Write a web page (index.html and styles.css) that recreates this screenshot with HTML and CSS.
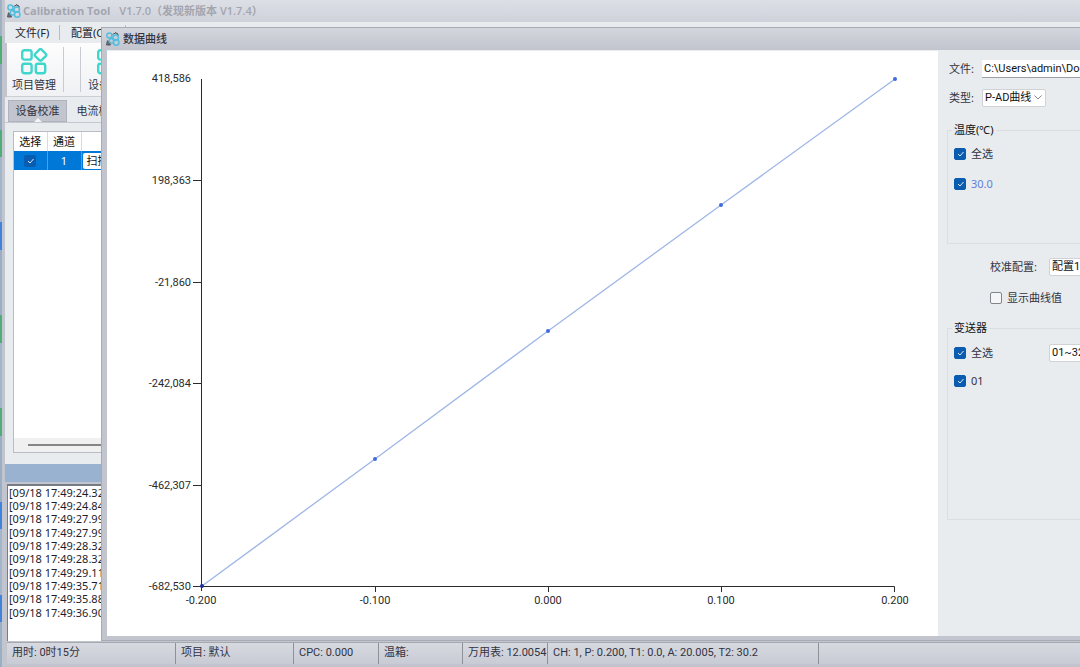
FILE: index.html
```
<!DOCTYPE html>
<html lang="zh-CN">
<head>
    <meta charset="UTF-8">
    <meta name="viewport" content="width=device-width, initial-scale=1.0">
    <title>Calibration Tool</title>
    <link rel="stylesheet" href="styles.css">
</head>
<body>
    <svg class="symbols" aria-hidden="true">
        <symbol id="app-logo" viewBox="0 0 14 14">
            <path d="M6.500 2.500 9.500 1M9 .5l3 1.500v2M1.500 8.500.5 13h4L3 9" fill="#6b6e75" stroke="#55585e" stroke-width="1"/>
            <g fill="none" stroke="#52bfdf" stroke-width="1.5">
                <circle cx="3.400" cy="3.400" r="2.500"/>
                <circle cx="9.800" cy="5.600" r="2.700"/>
                <path d="M5.500 4.500C6 7 7 8 8.500 8.200"/>
                <circle cx="5.600" cy="8.800" r="2.300"/>
                <circle cx="10.200" cy="10.400" r="2.800"/>
            </g>
        </symbol>
        <symbol id="grid-icon" viewBox="0 0 28 28">
            <g fill="none" stroke="#3fd6cc" stroke-width="2.4">
                <rect x="2.2" y="2.2" width="9.4" height="9.4" rx="2.2"/>
                <rect x="2.2" y="15.8" width="9.4" height="9.4" rx="2.2"/>
                <rect x="15.8" y="15.8" width="9.4" height="9.4" rx="2.2"/>
                <rect x="16" y="2.4" width="9" height="9" rx="1.6" transform="rotate(45 20.5 6.9)"/>
            </g>
        </symbol>
    </svg>

    <div class="desktop">
        <div class="main-window">
            <header class="title-bar">
                <svg class="logo"><use href="#app-logo"/></svg>
                <h1>Calibration Tool</h1>
                <span>V1.7.0（发现新版本 V1.7.4）</span>
            </header>

            <nav class="menu-bar">
                <button type="button">文件(F)</button>
                <button type="button">配置(C)</button>
            </nav>

            <div class="toolbar">
                <button type="button" class="tool">
                    <svg><use href="#grid-icon"/></svg>
                    项目管理
                </button>
                <div class="tool-divider"></div>
                <button type="button" class="tool">
                    <svg><use href="#grid-icon"/></svg>
                    设备管理
                </button>
            </div>

            <div class="tabs">
                <button type="button" class="tab active">设备校准</button>
                <button type="button" class="tab">电流校准</button>
            </div>

            <div class="table-area">
                <div class="table-box">
                    <table>
                        <thead>
                            <tr><th>选择</th><th>通道</th><th></th></tr>
                        </thead>
                        <tbody>
                            <tr>
                                <td><input type="checkbox" class="check" aria-label="选择通道 1" checked></td>
                                <td>1</td>
                                <td class="scan-cell"><button type="button">扫描</button></td>
                            </tr>
                        </tbody>
                    </table>
                    <div class="scroll-track"><div class="scroll-thumb"></div></div>
                </div>
            </div>

            <div class="splitter"></div>

            <div class="log">
                <p>[09/18 17:49:24.32</p>
                <p>[09/18 17:49:24.84</p>
                <p>[09/18 17:49:27.99</p>
                <p>[09/18 17:49:27.99</p>
                <p>[09/18 17:49:28.32</p>
                <p>[09/18 17:49:28.32</p>
                <p>[09/18 17:49:29.11</p>
                <p>[09/18 17:49:35.71</p>
                <p>[09/18 17:49:35.88</p>
                <p>[09/18 17:49:36.90</p>
            </div>

            <footer class="status-bar">
                <span>用时: 0时15分</span>
                <span>项目: 默认</span>
                <span>CPC: 0.000</span>
                <span>温箱:</span>
                <span>万用表: 12.0054</span>
                <span>CH: 1, P: 0.200, T1: 0.0, A: 20.005, T2: 30.2</span>
                <span></span>
            </footer>
        </div>

        <section class="dialog">
            <header class="dialog-title">
                <svg class="logo"><use href="#app-logo"/></svg>
                <h2>数据曲线</h2>
            </header>
            <div class="dialog-body">
                <div class="chart">
                    <svg viewBox="0 0 831 585">
                        <g class="axis">
                            <path d="M94.500 28V540M94 535.500H787.500V541"/>
                            <path d="M86 129.500h8M86 231.500h8M86 332.500h8M86 434.500h8M86 535.500h8"/>
                            <path d="M268.500 535v6M441.500 535v6M614.500 535v6"/>
                        </g>
                        <g class="y-labels">
                            <text x="84" y="31">418,586</text>
                            <text x="84" y="133">198,363</text>
                            <text x="84" y="235">-21,860</text>
                            <text x="84" y="336">-242,084</text>
                            <text x="84" y="438">-462,307</text>
                            <text x="84" y="539">-682,530</text>
                        </g>
                        <g class="x-labels">
                            <text x="94" y="553">-0.200</text>
                            <text x="268" y="553">-0.100</text>
                            <text x="441" y="553">0.000</text>
                            <text x="614" y="553">0.100</text>
                            <text x="788" y="553">0.200</text>
                        </g>
                        <polyline class="curve" points="95,535 268,408 441,280 614,154 788,28"/>
                        <g class="points">
                            <circle class="start" cx="95" cy="535" r="2"/>
                            <circle cx="268" cy="408" r="2"/>
                            <circle cx="441" cy="280" r="2"/>
                            <circle cx="614" cy="154" r="2"/>
                            <circle cx="788" cy="28" r="2"/>
                        </g>
                    </svg>
                </div>

                <form class="side-panel">
                    <div class="field">
                        <label for="file">文件:</label>
                        <input type="text" id="file" value="C:\Users\admin\Documents">
                    </div>
                    <div class="field">
                        <label for="type">类型:</label>
                        <select id="type"><option>P-AD曲线</option></select>
                    </div>
                    <fieldset class="group temperature">
                        <legend>温度(℃)</legend>
                        <label><input type="checkbox" class="check" checked>全选</label>
                        <label class="series"><input type="checkbox" class="check" checked>30.0</label>
                    </fieldset>
                    <div class="field config">
                        <label for="config">校准配置:</label>
                        <select id="config"><option>配置1</option></select>
                    </div>
                    <label class="show-values"><input type="checkbox" class="check">显示曲线值</label>
                    <fieldset class="group transmitter">
                        <legend>变送器</legend>
                        <div class="group-row">
                            <label><input type="checkbox" class="check" checked>全选</label>
                            <select aria-label="变送器范围"><option>01~32</option></select>
                        </div>
                        <label><input type="checkbox" class="check" checked>01</label>
                    </fieldset>
                </form>
            </div>
        </section>
    </div>
</body>
</html>
```

FILE: styles.css
```
* {
    box-sizing: border-box;
}

body {
    margin: 0;
    font-family: "Noto Sans", "Noto Sans CJK SC", sans-serif;
    font-size: 11px;
    line-height: 16px;
    color: #33333f;
}

button, input, select {
    font: inherit;
    color: inherit;
}

h1, h2, p {
    margin: 0;
    font-size: inherit;
}

.symbols {
    position: absolute;
    width: 0;
    height: 0;
}

.desktop {
    position: relative;
    height: 100vh;
    overflow: hidden;
    padding-left: 2px;
    background: linear-gradient(#9fb2c4 0 36px, #4fae78 36px 64px, #93a8be 64px 130px, #4fae78 130px 157px, #a3b5ca 157px 222px, #3f83dc 222px 250px, #9aaec6 250px 315px, #4fae78 315px 343px, #a3b5ca 343px 408px, #4fae78 408px 436px, #9aaec6 436px 502px, #3f83dc 502px 529px, #a3b5ca 529px 595px, #3f83dc 595px 622px, #9aaec6 622px);
}

/* Ventana principal */
.main-window {
    display: flex;
    flex-direction: column;
    height: 100%;
    padding: 0 0 3px 3px;
    background-color: #c2c4ce;
}

.title-bar, .dialog-title {
    display: flex;
    align-items: center;
}

.title-bar {
    flex: 0 0 22px;
    gap: 9px;
    padding-left: 2px;
    background: linear-gradient(#dcdfe6, #cfd2da);
    color: #a3a5ae;
    font-family: "Open Sans", "Noto Sans CJK SC", sans-serif;
    font-weight: 600;
}

.title-bar .logo {
    margin-right: -7px;
}

.logo {
    width: 14px;
    height: 14px;
}

.menu-bar {
    display: flex;
    flex: 0 0 21px;
    background-color: #e8ecef;
}

.menu-bar button {
    width: 55px;
    padding: 0 0 0 10px;
    border: none;
    border-right: 1px solid #b9bcc4;
    background: none;
    text-align: left;
    margin: 3px 0;
    line-height: 15px;
    color: #22222a;
}

.menu-bar button + button {
    width: 66px;
    padding-left: 11px;
}

.toolbar {
    display: flex;
    flex: 0 0 54px;
    margin-left: 2px;
    background: linear-gradient(#fdfdfd, #eff1f4);
    border-bottom: 1px solid #ccced6;
}

.tool {
    display: flex;
    flex-direction: column;
    align-items: center;
    width: 56px;
    padding: 5px 2px 0 0;
    border: none;
    background: none;
    white-space: nowrap;
}

.tool svg {
    width: 28px;
    height: 28px;
    margin-bottom: 1px;
}

.tool-divider {
    width: 18px;
    margin: 4px 0;
    border: solid #c9cbd2;
    border-width: 0 1px;
}

.tool-divider + .tool {
    padding-left: 4px;
}

.tabs {
    display: flex;
    flex: 0 0 26px;
    padding: 3px 0 0 3px;
    background-color: #e8ecef;
    border-bottom: 1px solid #c6c8d0;
}

.tab {
    position: relative;
    width: 59px;
    padding: 0;
    border: none;
    background: none;
    white-space: nowrap;
}

.tab + .tab {
    padding-left: 4px;
}

.tab.active {
    background-color: #c2c4ce;
    border: 1px solid #b0b3bd;
}

.tab.active::after {
    content: "";
    position: absolute;
    left: 25px;
    bottom: -1px;
    border: 4px solid transparent;
    border-top: none;
    border-bottom-color: #f2f4f6;
}

.table-area {
    flex: 1;
    padding: 8px 8px 11px;
    background-color: #e8ecef;
}

.table-box {
    display: flex;
    flex-direction: column;
    justify-content: space-between;
    height: 100%;
    background-color: #fff;
    border: 1px solid #b9bcc6;
}

table {
    width: 100%;
    table-layout: fixed;
    border-collapse: collapse;
    text-align: center;
}

th, td {
    height: 19px;
    padding: 0;
    border-right: 1px solid #d3dbe4;
    font-weight: normal;
    color: #111;
}

th:first-child, th:nth-child(2) {
    width: 34px;
}

th:first-child {
    width: 33px;
}

td {
    background-color: #0078d7;
    border-right-color: #4d9fe0;
    color: #fff;
}

.scan-cell {
    text-align: left;
}

.scan-cell button {
    display: block;
    width: 60px;
    height: 16px;
    margin-left: 1px;
    padding: 0 4px;
    border: none;
    border-radius: 2px;
    background-color: #fff;
    line-height: 16px;
    text-align: left;
    color: #111;
}

.scroll-track {
    height: 14px;
    padding: 6px 0 0 14px;
    background-color: #f0f0f0;
}

.scroll-thumb {
    height: 2px;
    background-color: #858585;
}

.splitter {
    flex: 0 0 18px;
    background-color: #99b2cf;
}

.log {
    flex: 0 0 157px;
    margin: 2px 0 0 2px;
    padding: 0 1px;
    border: 1px solid #777b83;
    border-width: 2px 0 0 1px;
    background-color: #fff;
    line-height: 13px;
    color: #1d1d2a;
}

.log p:nth-child(3n) {
    padding-bottom: 1px;
}

.status-bar {
    display: flex;
    flex: 0 0 22px;
    margin: 1px 0 0 2px;
    border-top: 1px solid #a6a8b0;
    background: linear-gradient(#d6d9df, #c8cbd4);
    font-family: Roboto, "Noto Sans CJK SC", sans-serif;
    line-height: 20px;
    white-space: nowrap;
}

.status-bar span {
    padding-left: 5px;
    border-right: 1px solid #8f9199;
}

.status-bar span:nth-child(1) { width: 169px; }
.status-bar span:nth-child(2) { width: 118px; }
.status-bar span:nth-child(3) { width: 85px; }
.status-bar span:nth-child(4) { width: 84px; }
.status-bar span:nth-child(5) { width: 85px; }
.status-bar span:nth-child(6) { width: 271px; }
.status-bar span:nth-child(7) { flex: 1; border-right: none; }

/* Ventana de la curva */
.dialog {
    position: absolute;
    top: 27px;
    right: 0;
    bottom: 26px;
    left: 101px;
    display: flex;
    flex-direction: column;
    padding: 0 0 4px 5px;
    border: 1px solid #a8abb5;
    border-right: none;
    background-color: #c2c4ce;
}

.dialog-title {
    flex: 0 0 22px;
    gap: 3px;
    margin-left: -5px;
    padding-left: 4px;
    background: linear-gradient(#d3d6dd, #c2c4ce);
}

.dialog-title h2 {
    font-weight: 500;
}

.dialog-body {
    display: flex;
    flex: 1;
    min-height: 0;
    background-color: #e8ecef;
    border-top: 1px solid #e8ecef;
}

.chart {
    flex: 1;
    min-width: 0;
    background-color: #fff;
}

.chart svg {
    display: block;
    width: 100%;
    height: 100%;
}

.axis {
    fill: none;
    stroke: #2b2b2b;
    stroke-width: 1;
}

.y-labels, .x-labels {
    font-family: Roboto, sans-serif;
    font-size: 11px;
    fill: #2b2b2b;
}

.y-labels {
    text-anchor: end;
}

.x-labels {
    text-anchor: middle;
}

.curve {
    fill: none;
    stroke: #9fb6e6;
    stroke-width: 1.3;
}

.points {
    fill: #4169e1;
}

.points .start {
    fill: #1c2f9c;
}

.side-panel {
    flex: 0 0 142px;
    padding: 8px 0 0 11px;
    overflow: hidden;
    white-space: nowrap;
}

.field {
    display: flex;
    align-items: center;
    height: 19px;
    margin-bottom: 10px;
}

.field label {
    width: 33px;
    flex-shrink: 0;
}

.field input {
    width: 200px;
    height: 18px;
    flex-shrink: 0;
    padding: 0 2px;
    border: none;
    border-bottom: 1px solid #9b9ea6;
    background-color: #fff;
    font-family: Roboto, sans-serif;
    color: #111;
}

select {
    flex-shrink: 0;
    width: 64px;
    height: 18px;
    padding: 0 2px;
    appearance: none;
    border: 1px solid #d0d2d6;
    border-radius: 2px;
    background: #fff url("data:image/svg+xml,%3Csvg xmlns='http://www.w3.org/2000/svg' width='8' height='5'%3E%3Cpath d='M.5.5 4 4 7.500.5' fill='none' stroke='%23888'/%3E%3C/svg%3E") no-repeat right 3px center;
    font-family: Roboto, "Noto Sans CJK SC", sans-serif;
    line-height: 16px;
    color: #111;
}

.group {
    width: 200px;
    margin: 0 0 0 -2px;
    padding: 0 0 0 6px;
    border: 1px solid #dadee2;
}

.group legend {
    margin-left: -2px;
    padding: 0 2px;
    color: #111;
}

.group label, .show-values {
    display: flex;
    align-items: center;
    gap: 5px;
}

.temperature {
    height: 122px;
    margin-top: 15px;
}

.temperature label {
    margin: 8px 0 14px;
}

.temperature .series {
    margin: 0;
    color: #6380dc;
}

.config {
    margin: 13px 0 14px 41px;
}

.config label {
    width: 59px;
}

.show-values {
    margin-left: 41px;
}

.transmitter {
    height: 200px;
    margin-top: 14px;
}

.group-row {
    display: flex;
    align-items: center;
    height: 18px;
    margin: 8px 0 11px;
}

.group-row label {
    width: 95px;
}

.check {
    width: 12px;
    height: 12px;
    margin: 0;
    flex-shrink: 0;
    appearance: none;
    border: 1px solid #82858b;
    border-radius: 2px;
    background: #f5f6f7 no-repeat center;
}

.check:checked {
    border-color: #0a5cb0;
    background-color: #0a5cb0;
    background-image: url("data:image/svg+xml,%3Csvg xmlns='http://www.w3.org/2000/svg' width='7' height='6'%3E%3Cpath d='M1 3l2 2L6.500 1' fill='none' stroke='%23dce9f7'/%3E%3C/svg%3E");
}

td .check {
    display: block;
    margin: 0 auto;
}
```
